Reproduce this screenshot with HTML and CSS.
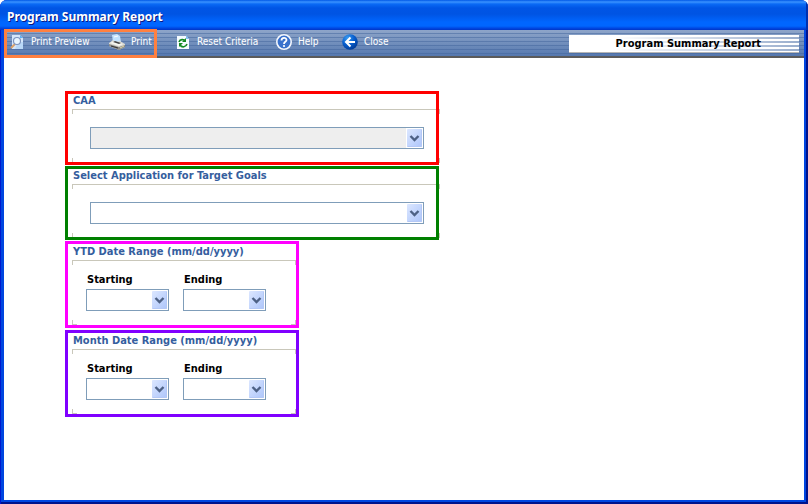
FILE: index.html
```html
<!DOCTYPE html>
<html lang="en">
<head>
<meta charset="utf-8">
<title>Program Summary Report</title>
<link rel="stylesheet" href="styles.css">
</head>
<body>
<svg class="defs" aria-hidden="true">
  <defs>
    <linearGradient id="arrow-face" x1="0" y1="0" x2="1" y2="1">
      <stop offset="0" stop-color="#dce7ff"/><stop offset=".5" stop-color="#c4d6fd"/><stop offset="1" stop-color="#adc5fa"/>
    </linearGradient>
    <radialGradient id="ball" cx=".35" cy=".25" r=".8">
      <stop offset="0" stop-color="#3c9cf0"/><stop offset=".5" stop-color="#0860d0"/><stop offset="1" stop-color="#023a94"/>
    </radialGradient>
    <symbol id="drop" viewBox="0 0 15 18">
      <rect width="15" height="18" rx="1" fill="url(#arrow-face)"/>
      <path d="M.5 17.5h14V.5" fill="none" stroke="#b4c8f6"/>
      <path d="M3.500 7l4 4 4-4" fill="none" stroke="#4d6185" stroke-width="2.400"/>
    </symbol>
  </defs>
</svg>
<div class="window">
  <header class="titlebar"><h1>Program Summary Report</h1></header>
  <main class="client">
    <div class="toolbar">
      <nav class="actions" aria-label="Report actions">
        <button type="button">
          <svg class="icon" viewBox="0 0 16 16"><path d="M3 1h8l3 3v11H3z" fill="#d5e6fa"/><path d="M11 1v3h3z" fill="#5fb0f4"/><path d="M9 8h5v7H6z" fill="#b9d8f7"/><path d="M6 10l-4 4" stroke="#d9a066" stroke-width="2"/><circle cx="8" cy="7" r="3.500" fill="#e9f6ff" stroke="#7c93bd" stroke-width="1.200"/></svg>
          <span>Print Preview</span>
        </button>
        <button type="button">
          <svg class="icon" viewBox="0 0 16 16"><path d="M4 8L3 1l5-1 3 2 1 6z" fill="#c2e3ff"/><path d="M5 3l4-1" stroke="#fff"/><path d="M0 9l4-3 3 2 4-1 5 3v3l-6 3-10-4z" fill="#d9d9d2"/><path d="M1 9l4-2 9 3-4 2z" fill="#f6f6ef"/><path d="M4 8l2-1 6 2-2 1z" fill="#454545"/><path d="M0 10l10 3 6-2v2l-6 3-10-4z" fill="#8a8a87"/><path d="M2 12l7 2" stroke="#333"/><path d="M11 14l4-2" stroke="#ddd6aa"/></svg>
          <span>Print</span>
        </button>
        <button type="button">
          <svg class="icon" viewBox="0 0 16 16"><path d="M2 2h9l3 3v10H2z" fill="#f4faff"/><path d="M11 1v4h3z" fill="#83bdf0"/><path d="M4 8c1-3 5-3 6-1M12 10c-1 3-5 4-7 1" fill="none" stroke="#158a24" stroke-width="1.600"/><path d="M11 4v4H7zM4 13V9h4z" fill="#158a24"/></svg>
          <span>Reset Criteria</span>
        </button>
        <button type="button">
          <svg class="icon" viewBox="0 0 16 16"><circle cx="8" cy="8" r="7.200" fill="#3971cc" stroke="#f4f7fd" stroke-width="1.600"/><path d="M5.500 6.500c0-3.500 5-3.300 5-.5 0 2-2.500 1.700-2.500 4" fill="none" stroke="#fff" stroke-width="1.800"/><circle cx="8" cy="12" r="1.100" fill="#fff"/></svg>
          <span>Help</span>
        </button>
        <button type="button">
          <svg class="icon" viewBox="0 0 16 16"><circle cx="8" cy="8" r="7.800" fill="url(#ball)"/><path d="M8.500 3.500L4 8l4.500 4.500M4 8h9" fill="none" stroke="#fff" stroke-width="2"/></svg>
          <span>Close</span>
        </button>
      </nav>
      <div class="caption">Program Summary Report</div>
    </div>
    <form class="criteria">
      <section class="group wide red">
        <label class="legend" for="caa">CAA</label>
        <div class="frame">
          <div class="combo disabled"><select id="caa" disabled></select><svg class="drop"><use href="#drop"/></svg></div>
        </div>
      </section>
      <section class="group wide green">
        <label class="legend" for="app">Select Application for Target Goals</label>
        <div class="frame">
          <div class="combo"><select id="app"></select><svg class="drop"><use href="#drop"/></svg></div>
        </div>
      </section>
      <section class="group dates magenta">
        <h2 class="legend">YTD Date Range (mm/dd/yyyy)</h2>
        <div class="frame">
          <div class="field"><label for="ytd-start">Starting</label><div class="combo"><select id="ytd-start"></select><svg class="drop"><use href="#drop"/></svg></div></div>
          <div class="field"><label for="ytd-end">Ending</label><div class="combo"><select id="ytd-end"></select><svg class="drop"><use href="#drop"/></svg></div></div>
        </div>
      </section>
      <section class="group dates purple">
        <h2 class="legend">Month Date Range (mm/dd/yyyy)</h2>
        <div class="frame">
          <div class="field"><label for="month-start">Starting</label><div class="combo"><select id="month-start"></select><svg class="drop"><use href="#drop"/></svg></div></div>
          <div class="field"><label for="month-end">Ending</label><div class="combo"><select id="month-end"></select><svg class="drop"><use href="#drop"/></svg></div></div>
        </div>
      </section>
    </form>
  </main>
</div>
</body>
</html>
```
FILE: styles.css
```css
*, *::before, *::after { box-sizing: border-box; }
body {
  margin: 0;
  background: #fff;
  font: 11px/14px Tahoma, "DejaVu Sans Condensed", "DejaVu Sans", sans-serif;
}
.defs { position: absolute; width: 0; height: 0; }
.window {
  display: flex;
  flex-direction: column;
  min-height: 100vh;
  border-radius: 7px 7px 0 0;
  overflow: hidden;
  background: #0046e0;
  box-shadow: inset 1px 0 #0019cf, inset -2px -2px #00138c;
}
.titlebar {
  height: 30px;
  padding: 8px 7px 0;
  background: linear-gradient(#0058e6 0, #3a93ff 2px, #0a6af5 4px, #0055e5 8px, #0054e3 14px, #0066ff 22px, #0066ff 26px, #003dd7 29px, #0037c4);
  box-shadow: inset -2px 0 #0030b0;
}
h1 {
  margin: 0;
  font: bold 12px/18px "Trebuchet MS", "Noto Sans", sans-serif;
  color: #fff;
  text-shadow: 1px 1px #0a1883;
}
.client {
  flex: 1;
  margin: 0 4px 4px;
  background: #fff;
}
.toolbar {
  position: relative;
  display: flex;
  justify-content: space-between;
  height: 28px;
  padding: 4px 5px 0;
  border-bottom: 2px solid #5b5b5b;
  background:
    repeating-linear-gradient(transparent 0 3px, rgba(65, 100, 155, .5) 3px 4px),
    linear-gradient(#8ea5c9, #5578af);
}
.toolbar::after {
  content: "";
  position: absolute;
  left: 0;
  top: -1px;
  width: 153px;
  height: 29px;
  border: 3px solid #ff8040;
  pointer-events: none;
}
.actions {
  display: grid;
  grid-template-columns: 100px 66px 101px 66px auto;
}
.actions button {
  display: flex;
  align-items: center;
  gap: 6px;
  height: 16px;
  padding: 0;
  border: 0;
  background: none;
  color: #fff;
  font: 10px/16px Tahoma, "DejaVu Sans Condensed", sans-serif;
  white-space: nowrap;
}
.icon { width: 16px; height: 16px; flex: none; }
.caption {
  width: 230px;
  height: 18px;
  margin-top: 1px;
  padding-right: 38px;
  border-bottom: 1px solid #b5b5b5;
  background:
    linear-gradient(90deg, #fff 20%, transparent),
    repeating-linear-gradient(#fff 0 2px, #9aaecd 2px 4px);
  font-weight: bold;
  line-height: 18px;
  text-align: right;
  white-space: nowrap;
}
.criteria {
  display: flex;
  flex-direction: column;
  align-items: flex-start;
  padding: 33px 0 0 61px;
}
.group {
  position: relative;
  display: flex;
  flex-direction: column;
  padding: 3px 3px 0 7px;
}
.group::after {
  content: "";
  position: absolute;
  inset: 0;
  border: 3px solid;
  pointer-events: none;
}
.wide { width: 374px; height: 74px; padding-right: 0; margin-bottom: 1px; }
.dates { width: 234px; height: 87px; margin-bottom: 2px; }
.red::after { border-color: #f00; }
.green::after { border-color: #008000; }
.magenta::after { border-color: #f0f; }
.purple::after { border-color: #8000ff; }
.legend {
  margin: 0 1px;
  font: inherit;
  font-weight: bold;
  color: #355e9e;
}
.frame {
  --c: linear-gradient(#c9c7ba, #c9c7ba);
  display: flex;
  flex: 1;
  gap: 14px;
  border-top: 1px solid #c9c7ba;
  background:
    var(--c) 0 0 / 1px 4px, var(--c) 100% 0 / 1px 4px,
    var(--c) 0 100% / 1px 5px, var(--c) 100% 100% / 1px 5px,
    var(--c) 0 100% / 5px 1px, var(--c) 100% 100% / 5px 1px;
  background-repeat: no-repeat;
}
.wide .frame { margin: 1px -1px 2px 0; padding: 17px 16px 0 18px; }
.dates .legend { line-height: 16px; }
.dates .frame { margin: 0 0 3px; padding: 12px 14px 0; }
.field { width: 83px; font-weight: bold; }
.field label { display: block; margin: 0 1px 2px; }
.combo { position: relative; width: 100%; height: 22px; }
select {
  display: block;
  width: 100%;
  height: 22px;
  margin: 0;
  border: 1px solid #7f9db9;
  border-radius: 0;
  background: #fff;
  appearance: none;
  font: inherit;
}
.disabled select { background: #eee; opacity: 1; box-shadow: inset -17px 0 #fff; }
.drop {
  position: absolute;
  top: 2px;
  right: 2px;
  width: 15px;
  height: 18px;
  pointer-events: none;
}
```
